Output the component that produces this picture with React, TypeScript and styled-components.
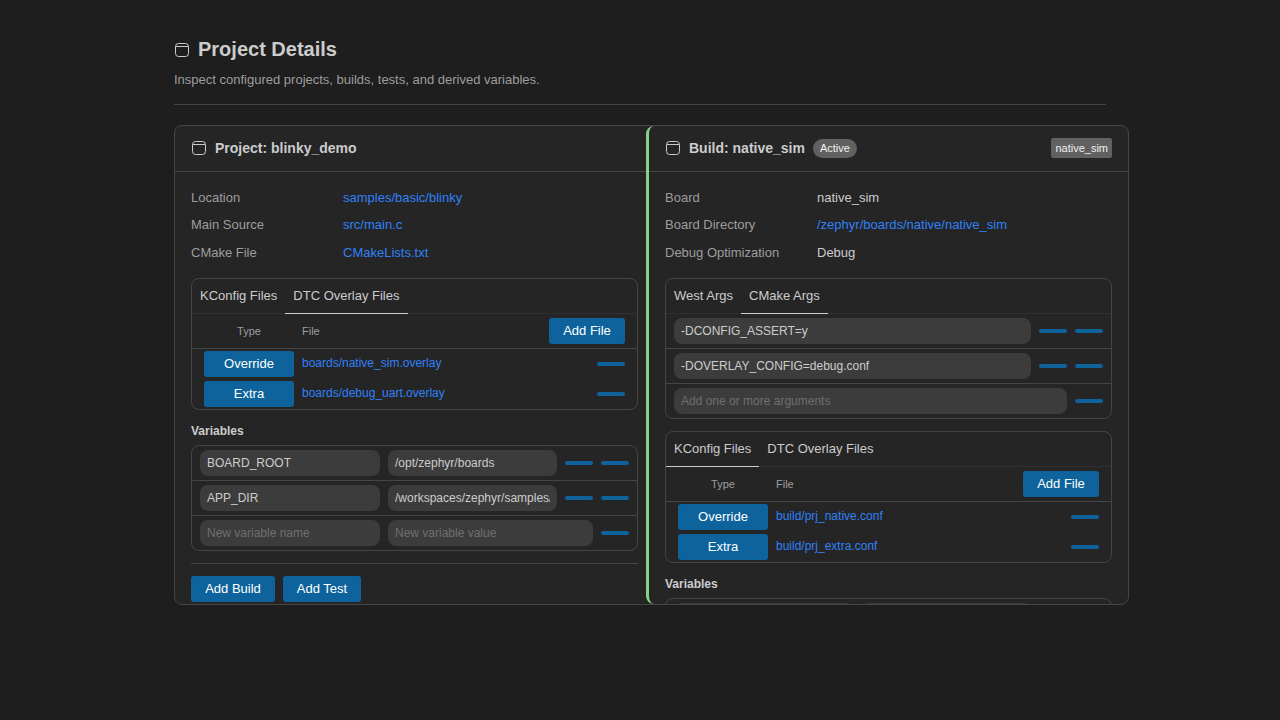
import React from "react";
import styled, { createGlobalStyle } from "styled-components";

const Global = createGlobalStyle`
  html, body { margin: 0; padding: 0; background: #1e1e1e; height: 100%; }
  body { font-family: "Liberation Sans", Arial, sans-serif; color: #cccccc; overflow: hidden; }
  * { box-sizing: border-box; }
`;

const Page = styled.main`
  width: 932px;
  margin-left: 174px;
  padding-top: 38px;
`;
const PageTitle = styled.h1`
  display: flex;
  align-items: center;
  gap: 8px;
  margin: 0;
  height: 23px;
  font-size: 20px;
  line-height: 23px;
  font-weight: 700;
  color: #cccccc;
`;
const Subtitle = styled.p`
  margin: 11px 0 0;
  font-size: 13px;
  line-height: 15px;
  color: #9d9d9d;
`;
const Rule = styled.hr`
  margin: 17px 0 0;
  border: 0;
  border-top: 1px solid #454545;
`;
const Card = styled.section`
  display: flex;
  width: 955px;
  height: 480px;
  margin-top: 20px;
  background: #252526;
  border: 1px solid #454545;
  border-radius: 8px;
  overflow: hidden;
`;
const Pane = styled.div<{ $accent?: boolean }>`
  flex: 0 0 ${(p) => (p.$accent ? "482px" : "471px")};
  height: 100%;
  overflow: hidden;
  border-left: ${(p) => (p.$accent ? "3px solid #89d185" : "0")};
  border-radius: ${(p) => (p.$accent ? "8px 0 0 8px" : "0")};
`;
const PaneHead = styled.header`
  display: flex;
  align-items: center;
  gap: 8px;
  height: 46px;
  padding: 0 16px 1px;
  border-bottom: 1px solid #454545;
`;
const PaneTitle = styled.h2`
  margin: 0;
  font-size: 14px;
  line-height: 16px;
  font-weight: 700;
  color: #cccccc;
`;
const Badge = styled.span`
  height: 19px;
  padding: 0 7px;
  border-radius: 10px;
  background: #616161;
  color: #f0f0f0;
  font-size: 11px;
  line-height: 19px;
`;
const Tag = styled.span`
  margin-left: auto;
  height: 20px;
  padding: 0 4px;
  border-radius: 2px;
  background: #616161;
  color: #f0f0f0;
  font-size: 11px;
  line-height: 20px;
`;
const PaneBody = styled.div`
  padding: 11.6px 16px 0;
`;
const Facts = styled.dl`
  display: grid;
  grid-template-columns: 152px 1fr;
  grid-auto-rows: 27.5px;
  margin: 0 0 -0.1px;
  font-size: 13px;
  align-items: center;
`;
const FactLabel = styled.dt`
  color: #9d9d9d;
`;
const FactValue = styled.dd`
  margin: 0;
  color: #cccccc;
`;
const Link = styled.a`
  color: #2f81f7;
  text-decoration: none;
`;
const Box = styled.div<{ $top?: number }>`
  width: 447px;
  margin-top: ${(p) => p.$top ?? 12}px;
  border: 1px solid #454545;
  border-radius: 8px;
  overflow: hidden;
`;
const Tabs = styled.div`
  display: flex;
  height: 35px;
  border-bottom: 1px solid #303031;
`;
const Tab = styled.button<{ $active?: boolean }>`
  height: 35px;
  padding: 0 8px 1px;
  background: none;
  border: 0;
  border-bottom: 1px solid ${(p) => (p.$active ? "#cccccc" : "transparent")};
  color: #cccccc;
  font: 13px "Liberation Sans", Arial, sans-serif;
`;
const FileHead = styled.div`
  display: grid;
  grid-template-columns: 102px 1fr 76px;
  column-gap: 8px;
  align-items: center;
  height: 35px;
  padding: 0 12px 0 0;
  border-bottom: 1px solid #454545;
  font-size: 11px;
  color: #9d9d9d;
`;
const TypeHead = styled.span`
  text-align: center;
  padding-left: 12px;
`;
const FileRows = styled.div`
  display: flex;
  flex-direction: column;
  gap: 4px;
  padding: 2px 12px;
`;
const FileRow = styled.div`
  display: flex;
  align-items: center;
  height: 26px;
  font-size: 12px;
`;
const FileLink = styled(Link)`
  flex: 1;
  margin-left: 8px;
  padding-bottom: 2px;
`;
const Primary = styled.button<{ $w: number }>`
  flex: 0 0 ${(p) => p.$w}px;
  width: ${(p) => p.$w}px;
  height: 26px;
  padding: 0 0 1px;
  border: 0;
  border-radius: 3px;
  background: #0e639c;
  color: #ffffff;
  font: 13px "Liberation Sans", Arial, sans-serif;
`;
const Minus = styled.button`
  flex: 0 0 28px;
  width: 28px;
  height: 4px;
  padding: 0;
  border: 0;
  border-radius: 2px;
  background: #0e639c;
`;
const EditRow = styled.div`
  display: flex;
  align-items: center;
  gap: 8px;
  padding: 4px 8px;
  &:not(:last-child) { border-bottom: 1px solid #454545; }
`;
const Field = styled.input<{ $w?: number }>`
  ${(p) => (p.$w ? `flex: 0 0 ${p.$w}px; width: ${p.$w}px;` : "flex: 1; min-width: 0;")}
  height: 26px;
  padding: 0 7px;
  border: 0;
  border-radius: 8px;
  background: #3c3c3c;
  color: #cccccc;
  font: 12px "Liberation Sans", Arial, sans-serif;
  outline: none;
  &::placeholder { color: #6f6f6f; opacity: 1; }
`;
const SectionLabel = styled.h3`
  margin: 14px 0 0;
  font-size: 12px;
  line-height: 14px;
  font-weight: 700;
  color: #cccccc;
`;
const BoxAfterLabel = styled(Box)`
  margin-top: 7px;
`;
const Divider = styled.hr`
  width: 447px;
  margin: 12px 0 0;
  border: 0;
  border-top: 1px solid #454545;
`;
const Actions = styled.div`
  display: flex;
  gap: 8px;
  margin-top: 12px;
`;

const PanelIcon = () => (
  <svg width="16" height="16" viewBox="0 0 16 16" fill="none" stroke="#cccccc" strokeWidth="1" style={{ flex: "none" }}>
    <rect x="1.5" y="1.5" width="13" height="13" rx="3" />
    <path d="M2 4.5h12" />
  </svg>
);

const FileBox = ({
  tabs,
  active,
  files,
}: {
  tabs: string[];
  active: number;
  files: [string, string][];
}) => (
  <Box>
    <Tabs>
      {tabs.map((t, i) => (
        <Tab key={t} $active={i === active}>{t}</Tab>
      ))}
    </Tabs>
    <FileHead>
      <TypeHead>Type</TypeHead>
      <span>File</span>
      <Primary $w={76}>Add File</Primary>
    </FileHead>
    <FileRows>
      {files.map(([type, file]) => (
        <FileRow key={file}>
          <Primary $w={90}>{type}</Primary>
          <FileLink href="#">{file}</FileLink>
          <Minus aria-label="Remove" />
        </FileRow>
      ))}
    </FileRows>
  </Box>
);

export default function App() {
  return (
    <>
      <Global />
      <Page>
        <PageTitle><PanelIcon />Project Details</PageTitle>
        <Subtitle>Inspect configured projects, builds, tests, and derived variables.</Subtitle>
        <Rule />
        <Card>
          <Pane>
            <PaneHead>
              <PanelIcon />
              <PaneTitle>Project: blinky_demo</PaneTitle>
            </PaneHead>
            <PaneBody>
              <Facts>
                <FactLabel>Location</FactLabel>
                <FactValue><Link href="#">samples/basic/blinky</Link></FactValue>
                <FactLabel>Main Source</FactLabel>
                <FactValue><Link href="#">src/main.c</Link></FactValue>
                <FactLabel>CMake File</FactLabel>
                <FactValue><Link href="#">CMakeLists.txt</Link></FactValue>
              </Facts>
              <FileBox
                tabs={["KConfig Files", "DTC Overlay Files"]}
                active={1}
                files={[
                  ["Override", "boards/native_sim.overlay"],
                  ["Extra", "boards/debug_uart.overlay"],
                ]}
              />
              <SectionLabel>Variables</SectionLabel>
              <BoxAfterLabel>
                <EditRow>
                  <Field $w={180} defaultValue="BOARD_ROOT" />
                  <Field $w={169} defaultValue="/opt/zephyr/boards" />
                  <Minus aria-label="Edit" />
                  <Minus aria-label="Remove" />
                </EditRow>
                <EditRow>
                  <Field $w={180} defaultValue="APP_DIR" />
                  <Field $w={169} defaultValue="/workspaces/zephyr/samples/basic/blinky" />
                  <Minus aria-label="Edit" />
                  <Minus aria-label="Remove" />
                </EditRow>
                <EditRow>
                  <Field $w={180} placeholder="New variable name" />
                  <Field $w={205} placeholder="New variable value" />
                  <Minus aria-label="Add" />
                </EditRow>
              </BoxAfterLabel>
              <Divider />
              <Actions>
                <Primary $w={84}>Add Build</Primary>
                <Primary $w={78}>Add Test</Primary>
              </Actions>
            </PaneBody>
          </Pane>
          <Pane $accent>
            <PaneHead>
              <PanelIcon />
              <PaneTitle>Build: native_sim</PaneTitle>
              <Badge>Active</Badge>
              <Tag>native_sim</Tag>
            </PaneHead>
            <PaneBody>
              <Facts>
                <FactLabel>Board</FactLabel>
                <FactValue>native_sim</FactValue>
                <FactLabel>Board Directory</FactLabel>
                <FactValue><Link href="#">/zephyr/boards/native/native_sim</Link></FactValue>
                <FactLabel>Debug Optimization</FactLabel>
                <FactValue>Debug</FactValue>
              </Facts>
              <Box>
                <Tabs>
                  <Tab>West Args</Tab>
                  <Tab $active>CMake Args</Tab>
                </Tabs>
                <EditRow>
                  <Field defaultValue="-DCONFIG_ASSERT=y" />
                  <Minus aria-label="Edit" />
                  <Minus aria-label="Remove" />
                </EditRow>
                <EditRow>
                  <Field defaultValue="-DOVERLAY_CONFIG=debug.conf" />
                  <Minus aria-label="Edit" />
                  <Minus aria-label="Remove" />
                </EditRow>
                <EditRow>
                  <Field placeholder="Add one or more arguments" />
                  <Minus aria-label="Add" />
                </EditRow>
              </Box>
              <FileBox
                tabs={["KConfig Files", "DTC Overlay Files"]}
                active={0}
                files={[
                  ["Override", "build/prj_native.conf"],
                  ["Extra", "build/prj_extra.conf"],
                ]}
              />
              <SectionLabel>Variables</SectionLabel>
              <BoxAfterLabel>
                <EditRow>
                  <Field $w={180} defaultValue="BOARD_ROOT" />
                  <Field $w={169} defaultValue="/opt/zephyr/boards" />
                  <Minus aria-label="Edit" />
                  <Minus aria-label="Remove" />
                </EditRow>
              </BoxAfterLabel>
            </PaneBody>
          </Pane>
        </Card>
      </Page>
    </>
  );
}
